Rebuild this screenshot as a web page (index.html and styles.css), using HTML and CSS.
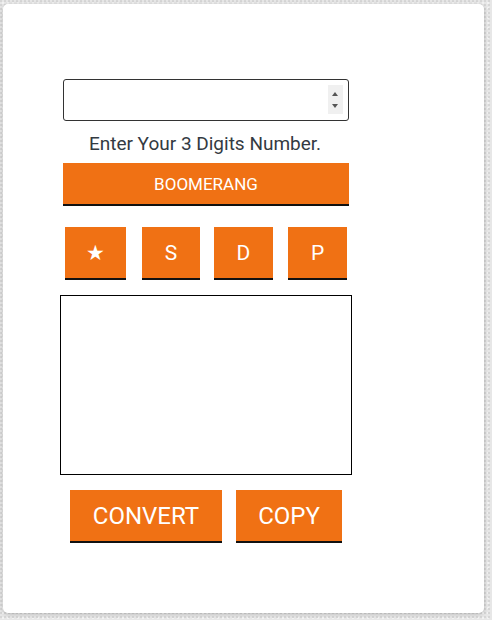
FILE: index.html
```html
<!DOCTYPE html>
<html>
<head>
<meta charset="utf-8">
<link rel="stylesheet" href="styles.css">
</head>
<body>
<div class="card">
  <div class="col">
    <div class="field">
      <input class="num" type="number">
      <span class="spin"><span class="up"></span><span class="down"></span></span>
    </div>
    <p class="label">Enter Your 3 Digits Number.</p>
    <button class="btn wide">BOOMERANG</button>
    <div class="row">
      <button class="btn sq b1">★</button>
      <button class="btn sq b2">S</button>
      <button class="btn sq b3">D</button>
      <button class="btn sq b4">P</button>
    </div>
    <textarea class="out"></textarea>
    <div class="row2">
      <button class="btn big b5">CONVERT</button>
      <button class="btn big b6">COPY</button>
    </div>
  </div>
</div>
</body>
</html>
```
FILE: styles.css
```css
html, body {
  margin: 0;
  padding: 0;
}
body {
  width: 492px;
  height: 620px;
  overflow: hidden;
  background-color: #e7e7e7;
  background-image:
    radial-gradient(circle at 1px 1px, #d6d6d6 1px, transparent 1px),
    radial-gradient(circle at 3px 3px, #f2f2f2 1px, transparent 1px);
  background-size: 4px 4px, 5px 5px;
  font-family: Roboto, "Liberation Sans", sans-serif;
}
.card {
  box-sizing: border-box;
  margin: 4px 0 0 3px;
  width: 481px;
  height: 609px;
  background: #fff;
  border-radius: 5px;
  box-shadow: 0 1px 4px rgba(0,0,0,0.22);
  padding: 71px 0 0 57px;
}
.col {
  width: 292px;
  display: flex;
  flex-direction: column;
}
.field {
  position: relative;
  margin: 4px 3px 0 3px;
  width: 286px;
  height: 42px;
}
.num {
  box-sizing: border-box;
  width: 286px;
  height: 42px;
  border: 1px solid #333;
  border-radius: 3px;
  padding: 0 5px;
  font-size: 16px;
  outline: none;
  -moz-appearance: textfield;
}
.num::-webkit-inner-spin-button,
.num::-webkit-outer-spin-button {
  -webkit-appearance: none;
  margin: 0;
}
.spin {
  position: absolute;
  top: 6px;
  right: 6px;
  width: 15px;
  height: 29px;
  background: #f0f0f0;
}
.up, .down {
  position: absolute;
  left: 4px;
  width: 0;
  height: 0;
  border-left: 3.5px solid transparent;
  border-right: 3.5px solid transparent;
}
.up {
  top: 7px;
  border-bottom: 4px solid #555;
}
.down {
  top: 19px;
  border-top: 4px solid #555;
}
.label {
  margin: 11px 0 7px 0;
  text-align: center;
  font-size: 19px;
  line-height: 24px;
  color: #333a42;
  padding-right: 2px;
}
.btn {
  box-sizing: border-box;
  background: #f07114;
  color: #fff;
  border: none;
  border-bottom: 2px solid #111;
  border-radius: 0;
  font-family: Roboto, "Liberation Sans", sans-serif;
  padding: 0;
  cursor: pointer;
}
.wide {
  margin-left: 3px;
  width: 286px;
  height: 43px;
  font-size: 17px;
}
.row {
  display: flex;
  margin: 21px 0 0 5px;
}
.sq {
  height: 53px;
  font-size: 21px;
}
.b1 { width: 61px; }
.b2 { width: 58px; margin-left: 16px; }
.b3 { width: 59px; margin-left: 14px; }
.b4 { width: 59px; margin-left: 15px; }
.out {
  box-sizing: border-box;
  margin-top: 15px;
  width: 292px;
  height: 180px;
  border: 1px solid #000;
  border-radius: 0;
  resize: none;
  outline: none;
}
.row2 {
  display: flex;
  margin: 15px 0 0 10px;
}
.big {
  height: 53px;
  font-size: 24px;
}
.b5 { width: 152px; }
.b6 { width: 106px; margin-left: 14px; }
```
